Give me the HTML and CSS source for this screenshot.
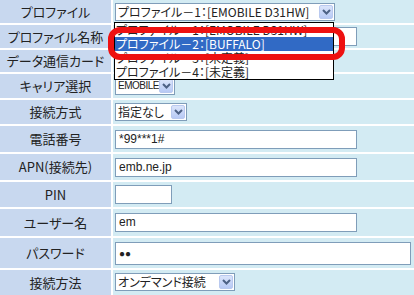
FILE: index.html
```html
<!DOCTYPE html>
<html lang="ja">
<head>
    <meta charset="UTF-8">
    <meta name="viewport" content="width=device-width, initial-scale=1.0">
    <title>プロファイル設定</title>
    <link rel="stylesheet" href="styles.css">
</head>
<body>
    <div class="page">
        <table class="form">
            <tr class="r1">
                <th>プロファイル</th>
                <td>
                    <span class="select w-profile">
                        <span class="val">プロファイル－1：[EMOBILE D31HW]</span>
                        <span class="arrow"><svg width="9" height="6" viewBox="0 0 9 6"><path d="M1 1 L4.5 4.5 L8 1" fill="none" stroke="#4d6185" stroke-width="2"/></svg></span>
                    </span>
                </td>
            </tr>
            <tr class="r2">
                <th>プロファイル名称</th>
                <td><span class="input w-long"></span></td>
            </tr>
            <tr class="r3">
                <th>データ通信カード</th>
                <td></td>
            </tr>
            <tr class="r4">
                <th>キャリア選択</th>
                <td>
                    <span class="select w-carrier">
                        <span class="val">EMOBILE</span>
                        <span class="arrow"><svg width="9" height="6" viewBox="0 0 9 6"><path d="M1 1 L4.5 4.5 L8 1" fill="none" stroke="#4d6185" stroke-width="2"/></svg></span>
                    </span>
                </td>
            </tr>
            <tr class="r5">
                <th>接続方式</th>
                <td>
                    <span class="select w-mode">
                        <span class="val">指定なし</span>
                        <span class="arrow"><svg width="9" height="6" viewBox="0 0 9 6"><path d="M1 1 L4.5 4.5 L8 1" fill="none" stroke="#4d6185" stroke-width="2"/></svg></span>
                    </span>
                </td>
            </tr>
            <tr class="r6">
                <th>電話番号</th>
                <td><span class="input w-long">*99***1#</span></td>
            </tr>
            <tr class="r7">
                <th>APN(接続先)</th>
                <td><span class="input w-long">emb.ne.jp</span></td>
            </tr>
            <tr class="r8">
                <th>PIN</th>
                <td><span class="input w-pin"></span></td>
            </tr>
            <tr class="r9">
                <th>ユーザー名</th>
                <td><span class="input w-long">em</span></td>
            </tr>
            <tr class="r10">
                <th>パスワード</th>
                <td><span class="input w-pass"><span class="dots">●●</span></span></td>
            </tr>
            <tr class="r11">
                <th>接続方法</th>
                <td>
                    <span class="select w-conn">
                        <span class="val">オンデマンド接続</span>
                        <span class="arrow"><svg width="9" height="6" viewBox="0 0 9 6"><path d="M1 1 L4.5 4.5 L8 1" fill="none" stroke="#4d6185" stroke-width="2"/></svg></span>
                    </span>
                </td>
            </tr>
        </table>

        <!-- open list of the profile select -->
        <div class="dropdown">
            <div class="opt">プロファイル－1：[EMOBILE D31HW]</div>
            <div class="opt on">プロファイル－2：[BUFFALO]</div>
            <div class="opt">プロファイル－3：[未定義]</div>
            <div class="opt">プロファイル－4：[未定義]</div>
        </div>
        <div class="callout"></div>
    </div>
</body>
</html>
```

FILE: styles.css
```css
body {
    margin: 0;
    background-color: #ffffff;
    font-family: "Noto Sans CJK JP", "Liberation Sans", sans-serif;
    font-size: 13px;
    color: #222;
    overflow: hidden;
}
.page {
    position: relative;
    width: 414px;
    height: 295px;
    overflow: hidden;
}
.form {
    border-collapse: separate;
    border-spacing: 2px;
    margin: -2px 0 0 -2px;
    width: 418px;
    background-color: #ffffff;
}
.form th {
    width: 111px;
    padding: 0;
    background-color: #c8d8ef;
    font-weight: normal;
    text-align: center;
    white-space: nowrap;
    font-feature-settings: "palt";
    overflow: hidden;
    line-height: 14px;
}
.form td {
    padding: 0 0 0 2px;
    background-color: #d3ebf3;
    vertical-align: middle;
}
.r1 th, .r1 td { height: 23px; }
.r2 th, .r2 td { height: 23px; }
.r3 th, .r3 td { height: 22px; }
.r4 th, .r4 td { height: 24px; }
.r5 th, .r5 td { height: 24px; }
.r6 th, .r6 td { height: 26px; }
.r7 th, .r7 td { height: 26px; }
.r8 th, .r8 td { height: 25px; }
.r9 th, .r9 td { height: 27px; }
.r10 th, .r10 td { height: 30px; }
.r11 th, .r11 td { height: 25px; }

.r1 td { vertical-align: top; padding-top: 3px; height: 20px; }
.r11 td { vertical-align: top; padding-top: 3px; height: 22px; }

.select {
    display: flex;
    align-items: center;
    box-sizing: border-box;
    height: 18px;
    border: 1px solid #7f9db9;
    background-color: #ffffff;
    padding: 0 1px 0 2px;
    font-size: 12px;
    font-feature-settings: "palt";
    white-space: nowrap;
}
.select .val {
    flex: 1;
    line-height: 16px;
    overflow: hidden;
}
.select .arrow {
    display: flex;
    align-items: center;
    justify-content: center;
    flex: none;
    width: 14px;
    height: 14px;
    box-sizing: border-box;
    border: 1px solid #b9c9ef;
    border-radius: 2px;
    background: linear-gradient(#dbe5fb, #b7c9f5);
}
.w-profile { width: 220px; }
.w-carrier { width: 60px; font-family: "Liberation Sans", sans-serif; font-size: 10px; letter-spacing: -0.5px; }
.w-mode { width: 72px; }
.w-conn { width: 120px; }

.input {
    display: block;
    box-sizing: border-box;
    height: 19px;
    border: 1px solid #7f9db9;
    background-color: #ffffff;
    padding: 0 3px;
    font-family: "Liberation Sans", sans-serif;
    font-size: 12px;
    line-height: 17px;
}
.w-long { width: 242px; }
.w-pin { width: 57px; }
.w-pass { width: 296px; height: 23px; line-height: 21px; }
.dots {
    font-size: 10px;
    vertical-align: middle;
}

.dropdown {
    position: absolute;
    left: 114px;
    top: 22px;
    width: 220px;
    box-sizing: border-box;
    border: 1px solid #000000;
    background-color: #ffffff;
    font-size: 12px;
    font-feature-settings: "palt";
}
.opt {
    height: 14px;
    line-height: 14px;
    padding-left: 1px;
    white-space: nowrap;
    overflow: hidden;
}
.opt.on {
    background-color: #316ac5;
    color: #ffffff;
}
.callout {
    position: absolute;
    left: 108px;
    top: 27px;
    width: 237px;
    height: 33px;
    box-sizing: border-box;
    border: 6px solid #ee1111;
    border-radius: 12px;
}
```
